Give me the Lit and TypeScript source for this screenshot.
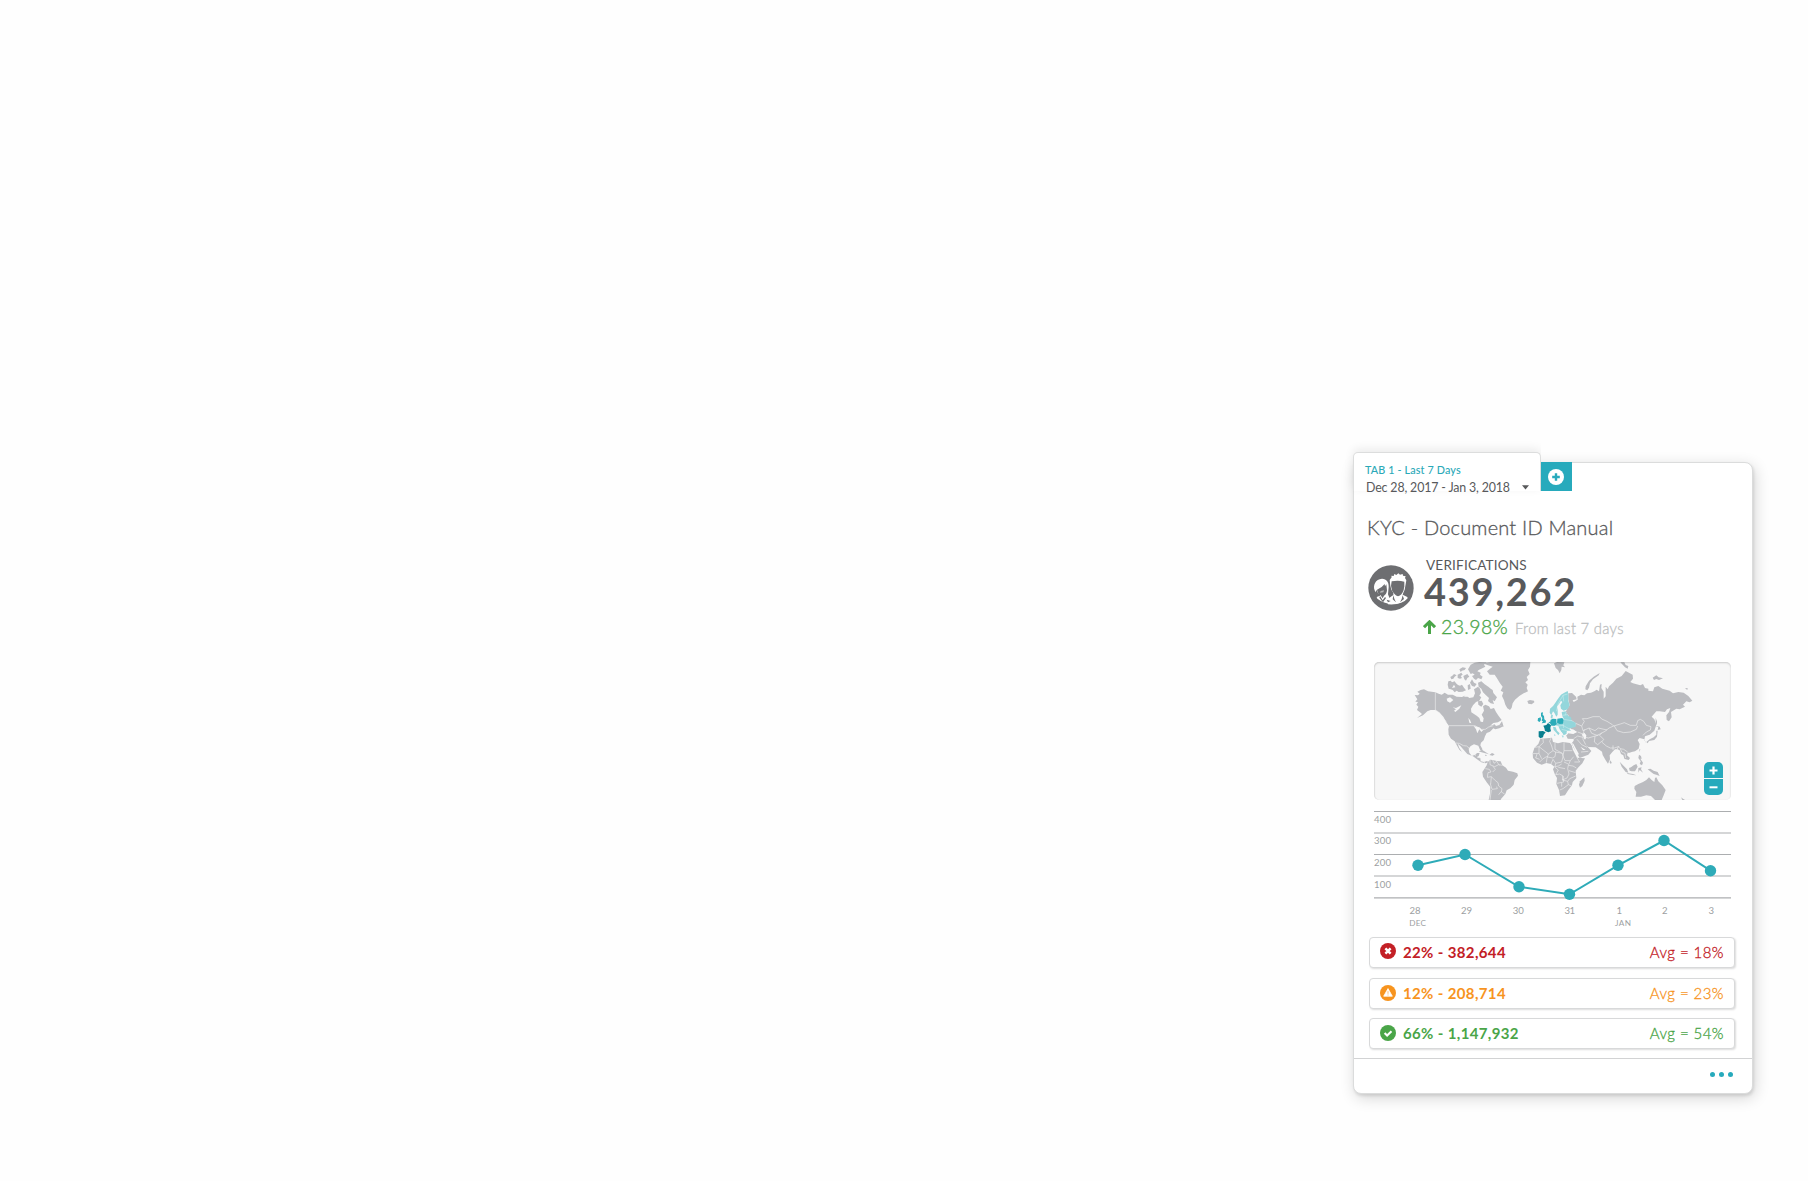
import { LitElement, html, svg, css } from "lit";
import { customElement } from "lit/decorators.js";

const LAND_WEST = [
  // North and Central America
  "M150 129L160 130L165 125L158 119L168 114L178 112L190 118L212 121L222 125L231 128L240 122L250 128L264 128L276 134L292 135L304 130L314 138L326 136L331 124L328 112L340 104L346 110L349 122L344 131L350 136L344 146L334 150L325 160L319 170L320 181L328 186L337 192L344 198L348 209L355 210L357 199L351 188L358 176L355 163L362 158L373 163L378 171L388 168L394 180L402 192L411 204L400 211L386 213L376 222L390 217L394 222L404 219L416 223L404 229L392 232L386 229L376 239L366 243L361 253L357 265L349 272L347 280L353 291L353 299L346 293L341 281L328 277L318 282L312 290L314 302L321 311L331 309L337 303L345 303L342 312L337 316L347 318L348 328L358 330L367 327L372 331L362 334L350 331L337 322L325 313L308 306L298 295L287 282L279 275L284 288L292 300L284 293L276 279L270 268L259 260L252 248L251 232L253 222L243 208L236 194L225 182L212 174L198 174L188 178L175 190L157 198L172 186L166 181L157 174L161 164L155 158L160 150L152 149L158 142Z",
  // Arctic islands
  "M249 98L251 88L258 86L262 91L270 88L274 94L280 99L286 101L292 98L298 107L304 115L294 119L282 120L276 116L270 121L264 114L258 112L252 110Z",
  "M257 75L263 71L268 66L276 70L270 74L266 80L260 82Z M279 68L290 62L294 68L288 72L292 78L286 80L279 78Z M296 72L308 66L314 74L308 78L304 86L299 82Z",
  "M284 52L294 46L304 48L300 54L292 56L288 60Z M310 52L318 38L330 32L344 30L366 31L358 38L362 44L350 50L342 54L338 58L348 62L346 68L354 74L350 82L340 78L334 84L328 80L322 72L330 68L324 64L318 66Z",
  "M316 92L322 82L328 92L336 96L330 104L322 102Z M309 100L316 96L318 110L310 114Z M340 92L350 88L360 97L371 104L378 110L384 114L386 123L397 136L390 148L384 144L388 156L378 154L370 147L373 138L364 130L355 121L350 110L342 104Z M340 148L351 146L356 156L350 164L341 158Z",
  // Greenland
  "M354 34L378 30L497 30L496 44L490 54L495 66L486 75L490 84L482 91L489 98L486 108L490 118L477 124L464 132L451 143L444 154L441 167L436 174L428 169L422 158L418 145L412 132L416 121L408 116L414 104L406 94L396 77L390 68L375 68L367 58L376 50L384 44L370 40Z",
  // Iceland
  "M488 147L496 144L508 146L509 151L501 157L491 155Z",
  // Newfoundland and Caribbean
  "M404 219L412 208L417 224Z M342 298L353 294L366 302L373 307L359 303L348 300Z M374 309L382 303L390 307L384 311Z M361 308L368 310L362 312Z",
  // South America
  "M369 331L376 323L384 324L396 327L408 328L413 340L424 347L430 356L445 359L458 364L460 371L450 384L447 398L437 409L426 415L422 426L409 441L408 444L372 444L376 425L377 405L366 391L355 374L353 360L359 351L366 340Z",
];

const LAND_EAST = [
  // Svalbard
  "M163 34L172 30L194 31L191 40L196 46L186 44L185 54L180 64L175 54L168 48Z",
  // Russia and Asia
  "M206 124L217 123L229 134L231 142L219 145L222 150L234 143L233 134L244 128L254 130L262 124L274 122L284 118L291 113L298 118L301 98L306 96L305 108L312 119L312 140L318 133L318 104L324 112L328 103L340 92L350 80L366 72L378 57L399 68L400 80L392 90L400 94L422 100L430 96L436 108L446 110L446 116L460 118L464 106L476 102L488 110L510 116L520 124L536 120L552 122L566 132L578 146L570 151L560 148L550 158L556 164L540 172L530 170L514 180L516 196L508 208L501 204L500 190L508 180L512 168L502 172L496 180L480 178L470 178L456 194L464 202L470 218L464 236L450 248L436 253L434 264L440 276L434 262L420 258L414 264L420 276L417 290L406 298L396 300L390 302L384 302L382 310L391 318L387 324L378 322L374 320L371 310L364 306L360 295L354 292L346 292L338 300L330 310L331 322L325 335L318 325L309 309L307 299L300 294L288 286L266 285L259 280L270 291L275 297L266 308L248 315L240 318L232 304L221 286L216 274L222 266L222 260L204 260L200 251L206 244L221 246L232 240L216 232L210 226L226 224L228 214L218 206L210 202L206 190L196 184L204 168L210 160L206 142Z",
  // Novaya Zemlya
  "M257 112L258 103L268 86L282 74L300 63L297 70L280 82L271 94L268 107L263 115Z",
  // Arctic Russia islands
  "M459 77L470 70L477 76L490 79L478 84L470 81L463 84Z M362 31L374 31L378 39L386 42L384 50L376 46Z M556 109L564 108L563 114Z",
  // Africa
  "M122 260L140 259L157 257L160 270L175 274L190 270L211 273L216 280L220 294L232 317L256 319L248 334L235 347L228 356L230 378L219 390L217 400L206 414L196 430L181 432L178 414L170 396L172 378L166 368L160 352L164 344L154 336L140 333L126 338L112 332L100 318L99 304L104 288L116 276Z",
  "M241 407L238 398L241 388L254 376L255 386L248 402Z",
  // Turkey
  "M200 250L212 246L232 248L236 256L220 260L206 259Z",
  // Sri Lanka
  "M331 325L336 331L334 336L330 332Z",
  // Japan
  "M474 234L476 226L466 221L480 224L483 232Z M470 248L470 236L474 236L472 254L464 264L448 267L444 274L440 270L450 262L462 256Z M468 198L472 208L472 220L468 212Z",
  // Taiwan and Philippines
  "M419 292L422 292L420 300Z M418 308L424 312L426 320L422 320L430 332L427 340L420 336L423 328L416 318Z",
  // Indonesia
  "M360 329L370 340L382 352L386 362L378 360L366 344Z M388 348L394 346L402 340L410 336L414 344L406 358L396 358L390 356Z M382 363L400 366L410 370L400 369L384 366Z M416 348L426 346L424 352L430 362L420 354L416 362Z M444 352L452 350L462 356L474 360L480 372L470 368L462 366L454 360Z",
  // Australia
  "M405 402L416 396L430 390L440 384L448 376L456 384L464 390L466 378L470 376L476 388L488 400L498 414L492 430L486 444L466 444L454 432L440 430L424 434L408 434L410 420L404 410Z",
  "M544 436L550 440L556 444L548 444Z",
];

const BORDERS_WEST =
  "M212 121L212 174L222 180L233 195L245 209 M253 221L331 221L342 228L350 232L362 232L372 225L386 221 M273 273L284 274L296 281L306 282L316 291 M322 312L328 306L334 311 M347 318L337 315 M358 330L362 334 M376 323L376 338L390 344L402 338L413 340 M362 350L374 352L379 360L370 362L368 376L380 374L390 384L400 392L402 402L412 410L410 420L420 426 M384 324L388 334L396 328L404 340 M377 395L382 412L398 410L396 404 M380 374L378 396 M380 414L376 444 M410 418L402 428 M385 343L392 352L384 360";

const BORDERS_EAST =
  "M130 260L131 272L118 284L106 286 M118 284L118 304L100 305 M118 284L146 306L160 296L156 282L150 268L154 258 M160 296L168 300L166 314L158 318L140 314L128 322L120 330 M118 304L126 320 M166 272L166 292L188 304L190 314L186 330 M168 300L188 304 M193 271L193 296L218 296 M193 296L190 312L196 326L212 326L222 314 M186 330L168 334L160 322L154 336 M146 306L142 318L140 332 M168 334L166 344L176 342L186 336 M164 344L176 354L168 368L180 366L190 372L188 384L202 378L208 366L204 350L206 340L212 326 M206 340L220 342L230 348 M208 356L228 362 M190 372L192 390L172 394 M188 384L204 388L210 380L228 372 M204 388L206 398L190 410L180 414 M206 398L216 402 M232 317L240 330L224 330 M112 306L108 318L120 322 M193 330L206 336 M196 350L176 346 M186 404L186 392";

const BORDERS_ASIA =
  "M228 214L246 222L254 208L248 200L262 200L280 194L300 194L306 201L322 208L338 218L342 222L362 216L374 212L392 220L410 220L414 206L422 202L432 208L440 220L454 224L452 234L440 240L430 250 M342 222L328 228L316 238L304 244L300 250L312 262L306 270L320 282L332 288L344 288L356 284L362 290L372 292L384 300 M344 222L352 236L372 242L392 240L410 232L414 222 M246 222L250 236L268 228L286 236L296 228L322 234 M234 240L250 246L254 232 M268 228L276 244L292 250L306 244 M250 246L250 262L258 278 M222 260L234 252L250 256 M250 254L266 258L286 252L284 270L294 278L306 268 M286 252L296 250 M232 262L246 278L262 286 M244 300L266 298 M340 294L340 280 M352 292L358 282 M362 290L366 300L376 304L378 318";

const EU_LIGHT = [
  "M155 190L150 182L151 170L160 162L166 154L174 142L184 128L194 122L204 117L206 126L206 146L210 160L204 172L192 176L184 170L182 160L188 150L184 146L178 156L172 164L174 174L174 188L170 194L164 182L160 178Z",
  "M186 180L198 178L202 186L206 192L214 196L216 206L228 212L228 224L216 228L208 230L214 236L202 236L200 246L192 250L188 242L180 232L176 222L164 220L154 218L158 211L174 213L190 213L192 200L188 192Z",
  "M160 224L168 226L172 236L180 244L176 250L170 242L162 234Z M164 246L168 250L164 252Z M180 226L194 232L200 246L190 244L184 238Z M186 250L192 252L190 258Z M154 190L160 188L158 200L153 198Z",
];
const EU_MID = [
  "M124 182L130 181L129 188L133 192L134 202L139 206L138 212L126 214L130 208L126 206L128 198L124 192Z M115 199L123 196L124 204L120 210L114 207Z",
  "M153 203L160 200L170 201L171 217L165 221L155 221L151 212Z M173 200L188 198L192 204L190 215L180 216L172 212Z M146 211L151 209L152 215Z",
];
const EU_DARK = [
  "M131 221L140 219L145 213L154 220L152 228L154 238L146 241L136 237L134 228Z",
  "M117 238L130 237L138 241L132 248L130 256L122 259L117 254Z",
];

const SERIES = [
  [44, 59.3], [91, 48.5], [145, 80.8], [195.5, 88.3], [244, 59.3], [290, 34.5], [336.5, 64.7],
];
const GRID = [5.5, 27, 48.5, 70, 91.9];
const LEVELS: [string, number][] = [["400", 16.7], ["300", 38], ["200", 59.7], ["100", 81.7]];
const DATES: [string, number, number][] = [
  ["28", 35.5, 11], ["29", 87, 11], ["30", 138.8, 11], ["31", 190.5, 10.5],
  ["1", 242.5, 4.5], ["2", 288, 5.5], ["3", 334.5, 5.5],
];

@customElement("world-map")
class WorldMap extends LitElement {
  static styles = css`
    :host { display: block; position: relative; height: 138px; }
    .map { display: block; width: 357px; height: 138px; border-radius: 5px; background: #f7f7f7; }
    .frame { position: absolute; inset: 0; border-radius: 5px; pointer-events: none;
      box-shadow: inset 0 1px 2px rgba(0,0,0,.18), inset 1px 0 1px rgba(0,0,0,.05); }
    .land { fill: #bbbcc0; }
    .border { fill: none; stroke: #f1f1f2; stroke-width: 1.8; stroke-linejoin: round; }
    .water { fill: #f7f7f7; }
    .light { fill: #93d6db; } .mid { fill: #2cacb9; } .dark { fill: #087f8f; }
    .thin { fill: none; stroke: #e3f5f6; stroke-width: 1.2; }
    .zoom { position: absolute; right: 8px; bottom: 5px; display: flex; flex-direction: column; gap: 1px; width: 19px; }
    .key { height: 16px; border: 0; padding: 0; background: #27aabc; display: grid; place-items: center; }
    .key.in { border-radius: 5px 5px 0 0; } .key.out { border-radius: 0 0 5px 5px; }
    .glyph { width: 9px; height: 9px; fill: #fff; display: block; }
  `;
  render() {
    return html`
      <svg class="map" viewBox="28 30 1071 414" preserveAspectRatio="none">
        ${LAND_WEST.map((d) => svg`<path class="land" d=${d} />`)}
        <path class="water" d="M246 140L256 136L266 144L256 152L248 148Z M264 166L274 168L290 160L284 170L272 180L268 176L274 172Z M311 198L316 204L320 214L314 212Z M327 222L344 226L352 234L358 232L350 240L344 232L338 244L334 232Z M262 108L268 98L272 106Z M298 134L306 124L310 134Z" />
        <path class="border" d=${BORDERS_WEST} />
        <g transform="translate(405 0)">
          ${LAND_EAST.map((d) => svg`<path class="land" d=${d} />`)}
          <path class="water" d="M246 248L254 242L260 250L258 262L254 262L252 254Z M216 273L221 275L238 307L233 309Z M242 284L258 294L250 294Z M206 236L220 232L232 240L218 244L206 243Z" />
          <path class="border" d=${BORDERS_EAST} />
          <path class="border" d=${BORDERS_ASIA} />
          ${EU_LIGHT.map((d) => svg`<path class="light" d=${d} />`)}
          <path class="thin" d="M170 178L176 154L190 130L204 126 M190 130L192 148 M188 190L204 188 M192 202L216 206 M176 222L190 220L200 226L208 230 M186 232L202 236 M190 214L192 228 M164 220L176 222 M200 180L196 190" />
          ${EU_MID.map((d) => svg`<path class="mid" d=${d} />`)}
          ${EU_DARK.map((d) => svg`<path class="dark" d=${d} />`)}
        </g>
      </svg>
      <div class="frame"></div>
      <div class="zoom">
        <button class="key in" aria-label="Zoom in"><svg class="glyph" viewBox="0 0 9 9"><path d="M3.4 .5h2.2v2.9h2.9v2.2H5.6v2.9H3.4V5.6H.5V3.4h2.9z" /></svg></button>
        <button class="key out" aria-label="Zoom out"><svg class="glyph" viewBox="0 0 9 9"><path d="M.5 3.3h8v2h-8z" /></svg></button>
      </div>`;
  }
}

@customElement("trend-chart")
class TrendChart extends LitElement {
  static styles = css`
    :host { display: block; height: 122px; }
    .chart { display: block; width: 357px; height: 122px; overflow: visible; font-family: Lato, sans-serif; }
    .grid { stroke: #acaeb0; stroke-width: 1.1; }
    .label { fill: #9d9fa2; font-size: 9.6px; }
    .month { fill: #9d9fa2; font-size: 8.2px; }
    .line { fill: none; stroke: #2eabb8; stroke-width: 2; }
    .dot { fill: #2eabb8; }
  `;
  render() {
    return html`<svg class="chart" viewBox="0 0 357 122">
      ${GRID.map((y) => svg`<line class="grid" x1="0" x2="357" y1=${y} y2=${y} />`)}
      ${LEVELS.map(([t, y]) => svg`<text class="label" x="0" y=${y} textLength="17">${t}</text>`)}
      <polyline class="line" points=${SERIES.map((p) => p.join(",")).join(" ")} />
      ${SERIES.map(([x, y]) => svg`<circle class="dot" cx=${x} cy=${y} r="5.7" />`)}
      ${DATES.map(([t, x, w]) => svg`<text class="label" x=${x} y="108" textLength=${w}>${t}</text>`)}
      <text class="month" x="35.3" y="120.3" textLength="16.7">DEC</text>
      <text class="month" x="241" y="120.3" textLength="16">JAN</text>
    </svg>`;
  }
}

const MARKS: Record<string, unknown> = {
  fail: svg`<path d="M5.4 5.4l5.2 5.2M10.6 5.4l-5.2 5.2" stroke="#fff" stroke-width="2.5" />`,
  warn: svg`<path d="M8 3.6L12.3 11.2H3.7z" fill="#fff" stroke="#fff" stroke-width=".8" stroke-linejoin="round" /><path d="M8 6.2v2.6M8 9.5v1" stroke="#f9bd72" stroke-width="1" />`,
  pass: svg`<path d="M4.6 8.1l2.5 2.4 4.4-4.3" fill="none" stroke="#fff" stroke-width="2.1" />`,
};
const ROWS = [
  { kind: "fail", text: "22% - 382,644", avg: "Avg = 18%" },
  { kind: "warn", text: "12% - 208,714", avg: "Avg = 23%" },
  { kind: "pass", text: "66% - 1,147,932", avg: "Avg = 54%" },
];

@customElement("app-root")
class AppRoot extends LitElement {
  static styles = css`
    :host { display: block; font-family: Lato, "Open Sans", sans-serif; color: #58595b; }
    * { box-sizing: border-box; }
    .stage { height: 1181px; background: #fefefe; display: flex; justify-content: flex-end; align-items: flex-end; padding: 0 55px 87px 0; overflow: hidden; }
    .widget { width: 400px; }
    .head { display: flex; align-items: flex-end; position: relative; z-index: 1; height: 39px; }
    .tab { width: 188px; height: 39px; background: #fff; border: 1px solid #dcdddd; border-bottom: 0; border-radius: 5px 5px 0 0; padding: 10px 0 0 11px; white-space: nowrap;
      box-shadow: 0 -3px 10px rgba(0,0,0,.08); clip-path: inset(-14px 0 -5px -14px); }
    .name { font-size: 10.8px; line-height: 14px; color: #2ba9b8; font-weight: 500; letter-spacing: .13px; }
    .range { display: flex; align-items: center; justify-content: space-between; font-size: 12.4px; line-height: 17px; padding: 0 11px 0 1px; margin-top: 2px; letter-spacing: -.15px; }
    .caret { width: 7px; height: 5px; fill: #58595b; }
    .add { width: 31px; height: 29px; border: 0; padding: 0 1px 0 0; background: #27aabc; display: grid; place-items: center; }
    .addicon { width: 16px; height: 16px; display: block; }
    .card { margin-top: -29px; height: 632px; background: #fff; border: 1px solid #dbdcdc; border-radius: 0 8px 8px 8px; padding: 44px 18px 0 15px;
      box-shadow: 1px 2px 3px rgba(0,0,0,.1), 2px 4px 15px rgba(0,0,0,.16); display: flex; flex-direction: column; }
    .title, .pct, .since, .avg { font-weight: 300; -webkit-text-stroke: .3px currentColor; }
    .title { font-size: 20px; line-height: 24px; margin: 8px 0 0 -2px; white-space: nowrap; letter-spacing: .2px; }
    .summary { display: flex; margin: 19px 0 0 -1px; height: 82px; gap: 9px; }
    .avatar { width: 46px; height: 46px; margin-top: 7px; flex: none; }
    .stats { display: flex; flex-direction: column; white-space: nowrap; }
    .kind { font-size: 13.6px; line-height: 16px; padding-left: 3px; margin-top: -1px; letter-spacing: .17px; }
    .total { font-size: 38px; line-height: 38px; font-weight: 700; margin: -1px 0 0 1px; letter-spacing: 1.7px; }
    .delta { display: flex; align-items: baseline; color: #4aa548; line-height: 24px; margin-top: 5px; }
    .arrow { width: 13px; height: 14px; margin-right: 5px; }
    .pct { font-size: 19.5px; margin-right: 7px; letter-spacing: .35px; }
    .since { font-size: 14.8px; color: #bcbec0; letter-spacing: .3px; }
    world-map, trend-chart { width: 357px; margin-left: 5px; }
    world-map { margin-top: 22px; }
    trend-chart { margin-top: 6px; }
    .rows { display: flex; flex-direction: column; gap: 9px; margin-top: 9px; width: 366px; }
    .row { height: 31px; border: 1px solid #d8d9da; border-radius: 4px; box-shadow: 1px 1px 2px rgba(0,0,0,.14); display: flex; align-items: center; padding: 0 10px 1px; background: #fff; white-space: nowrap; }
    .row.fail { padding-bottom: 2px; margin-bottom: 1px; }
    .mark { width: 16px; height: 16px; margin: -1px 7px 0 0; }
    .val { font-size: 15px; font-weight: 700; flex: 1; letter-spacing: .36px; }
    .avg { font-size: 15px; letter-spacing: .45px; }
    .fail { color: #c32026; } .warn { color: #f7941e; } .pass { color: #4aa548; }
    .foot { margin: 8.5px -18px 0 -15px; border-top: 1px solid #d2d3d4; flex: 1; display: flex; justify-content: flex-end; gap: 3.6px; padding: 13px 19px 0 0; }
    .pip { width: 5.4px; height: 5.4px; border-radius: 50%; background: #27aabc; }
  `;
  render() {
    return html`<div class="stage"><div class="widget">
      <div class="head">
        <div class="tab">
          <div class="name"><span>TAB 1 - Last 7 Days</span></div>
          <div class="range"><span>Dec 28, 2017 - Jan 3, 2018</span><svg class="caret" viewBox="0 0 7 5"><path d="M0 .3h7L3.5 4.4z" /></svg></div>
        </div>
        <button class="add" aria-label="Add tab"><svg class="addicon" viewBox="0 0 16 16"><circle cx="8" cy="8" r="8" fill="#fff" /><path d="M8 4.2v7.6M4.2 8h7.6" stroke="#27aabc" stroke-width="2.4" /></svg></button>
      </div>
      <div class="card">
        <div class="title"><span>KYC - Document ID Manual</span></div>
        <div class="summary">
          <svg class="avatar" viewBox="0 0 138 138">
            <circle cx="69" cy="69" r="68" fill="#6d6e71" />
            <path fill="#fff" d="M20 76C14 62 22 42 42 41C56 41 63 52 62 66L60 88L64 98L70 116Q48 116 28 101L26 96L36 92L38 88Q26 84 26 74L22 82Z" />
            <path fill="#6d6e71" d="M27 74Q42 68 50 57L51 64L55 58L57 76Q56 88 48 92L44 100L38 91Q29 87 27 74Z" />
            <path fill="#fff" d="M38 78L48 76L46 82L36 83Z" opacity=".5" />
            <path fill="#6d6e71" d="M36 93L44 106L51 96L54 99L45 112L34 98Z" />
            <path fill="#fff" d="M67 62L65 45L71 37L70 32L77 33L79 27L85 30L91 25L96 29L104 27L105 32L113 34L111 39L115 46L112 63L110 74L106 83L104 89L118 96L119 100Q102 121 60 118L56 104L76 90L76 83L70 74Z" />
            <path fill="#6d6e71" d="M69 62L71 49Q91 45 109 50L109 64L107 75Q102 91 90 94Q78 90 72 76Z" />
            <path fill="#6d6e71" d="M76 91L79 101L84 112L74 103Z M104 91L101 102L96 112L108 102Z M56 104L68 108L60 112Z" />
            <path fill="#fff" d="M80 93L89 99L99 93L94 114L86 116Z" />
          </svg>
          <div class="stats">
            <div class="kind"><span>VERIFICATIONS</span></div>
            <div class="total"><span>439,262</span></div>
            <div class="delta">
              <svg class="arrow" viewBox="0 0 13 14"><path d="M1 7.2L6.5 1.8L12 7.2M6.5 2.5V14" fill="none" stroke="#4aa548" stroke-width="3" /></svg>
              <span class="pct">23.98%</span><span class="since">From last 7 days</span>
            </div>
          </div>
        </div>
        <world-map></world-map>
        <trend-chart></trend-chart>
        <div class="rows">
          ${ROWS.map((r) => html`<div class="row ${r.kind}">
            <svg class="mark" viewBox="0 0 16 16"><circle cx="8" cy="8" r="8" fill="currentColor" />${MARKS[r.kind]}</svg>
            <span class="val">${r.text}</span><span class="avg">${r.avg}</span>
          </div>`)}
        </div>
        <div class="foot"><i class="pip"></i><i class="pip"></i><i class="pip"></i></div>
      </div>
    </div></div>`;
  }
}
